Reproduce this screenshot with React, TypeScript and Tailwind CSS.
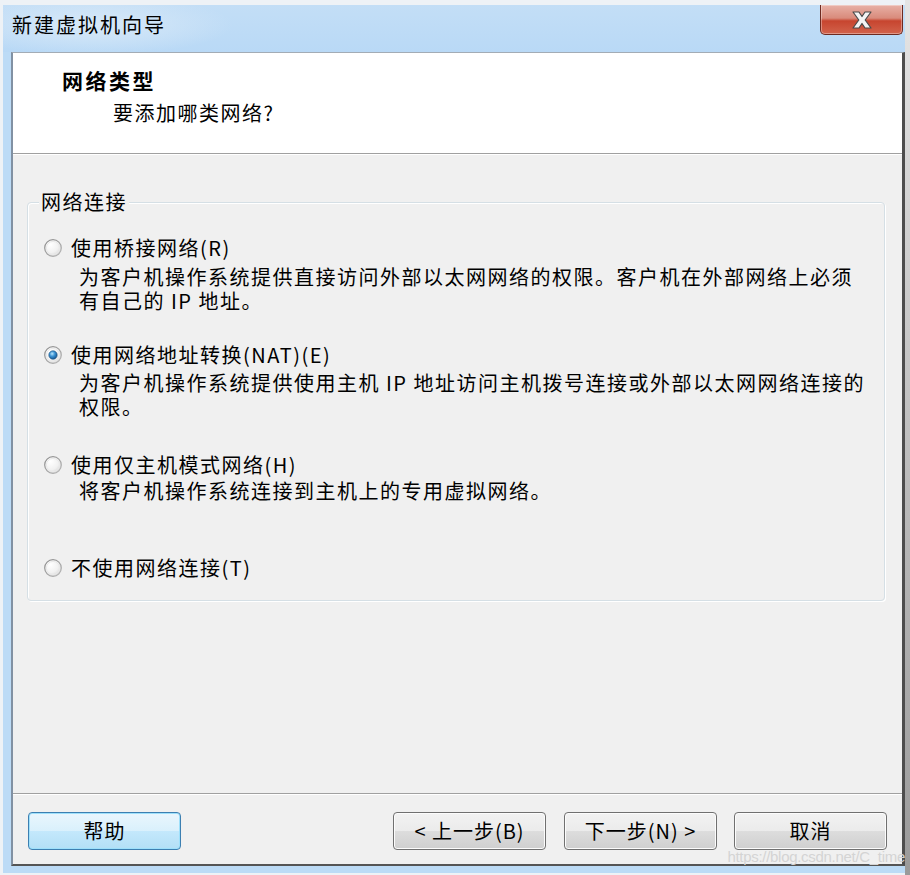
import React from "react";

const FONT = { fontFamily: '"Noto Sans CJK SC", "Noto Sans", sans-serif' };

function Radio({ checked }: { checked?: boolean }) {
  return (
    <svg width="18" height="18" viewBox="0 0 18 18" className="shrink-0">
      <defs>
        <radialGradient id="rg-off" cx="35%" cy="30%" r="80%">
          <stop offset="0%" stopColor="#ffffff" />
          <stop offset="60%" stopColor="#f1f1f1" />
          <stop offset="100%" stopColor="#d2d2d2" />
        </radialGradient>
        <linearGradient id="rg-ring" x1="0" y1="0" x2="1" y2="1">
          <stop offset="0%" stopColor="#8a8a8a" />
          <stop offset="100%" stopColor="#b8b8b8" />
        </linearGradient>
        <radialGradient id="rg-dot" cx="40%" cy="35%" r="70%">
          <stop offset="0%" stopColor="#b8e5fb" />
          <stop offset="45%" stopColor="#3a92d3" />
          <stop offset="100%" stopColor="#114f8a" />
        </radialGradient>
      </defs>
      <circle cx="9" cy="9" r="8.3" fill="url(#rg-off)" stroke="url(#rg-ring)" strokeWidth="1.2" />
      <circle cx="9" cy="9" r="6.6" fill="none" stroke="#e9e9e9" strokeWidth="1" />
      {checked && <circle cx="9" cy="9" r="4.2" fill="url(#rg-dot)" stroke="#1d4f7c" strokeWidth="0.6" />}
    </svg>
  );
}

function Btn({ children, primary }: { children: React.ReactNode; primary?: boolean }) {
  return (
    <div
      className={
        primary
          ? "w-[153px] h-[38px] rounded-[4px] border border-[#3c7fb1] shadow-[inset_0_0_0_1px_#9ee0fb] bg-[linear-gradient(to_bottom,#eaf6fd_0%,#d9f0fc_50%,#c4e8fc_50%,#b3dff6_100%)] flex items-center justify-center text-[20px] tracking-[1px] text-black"
          : "w-[153px] h-[38px] rounded-[4px] border border-[#707070] shadow-[inset_0_0_0_1px_#fcfcfc] bg-[linear-gradient(to_bottom,#f2f2f2_0%,#ebebeb_50%,#dddddd_50%,#cfcfcf_100%)] flex items-center justify-center text-[20px] tracking-[1px] text-black"
      }
    >
      {children}
    </div>
  );
}

export default function App() {
  return (
    <div className="w-[910px] h-[875px] bg-[#eef2f6] flex overflow-hidden relative" style={FONT}>
      <div className="flex-1 flex flex-col pt-[5px] pl-[3px] pb-[2px]">
        <div className="flex-1 flex flex-col bg-[#bcdbf6]">
          {/* Title bar */}
          <div className="h-[47px] shrink-0 flex items-start justify-between pl-[9px] pr-[2px] bg-[radial-gradient(ellipse_140px_30px_at_90px_20px,#d8e9f8_0%,rgba(216,233,248,0)_100%),linear-gradient(to_bottom,#c3def6,#b9d9f6)]">
            <div className="pt-[7px] text-[20px] leading-[26px] tracking-[2px] text-black">新建虚拟机向导</div>
            <div className="w-[83px] h-[30px] rounded-b-[5px] border border-t-0 border-[#6e2a20] bg-[linear-gradient(to_bottom,#e8b1a6_0%,#d98b7c_45%,#c7452f_55%,#d2634c_100%)] flex items-center justify-center shadow-[inset_0_0_0_1px_rgba(255,255,255,0.35)]">
              <svg width="22" height="18" viewBox="0 0 22 18">
                <path
                  d="M2 1 H8 L11 5.5 L14 1 H20 L14.2 9 L20 17 H14 L11 12.5 L8 17 H2 L7.8 9 Z"
                  fill="#f4f4f4"
                  stroke="#4a4a4a"
                  strokeWidth="1.2"
                  strokeLinejoin="round"
                />
              </svg>
            </div>
          </div>
          {/* Body with left frame */}
          <div className="flex-1 flex pl-[8px] pb-[7px]">
            <div className="flex-1 flex flex-col border-l-2 border-l-[#8191a3] border-r-[3px] border-r-[#4d4d4d] border-b-2 border-b-[#555555] border-t border-t-[#a3acb5] bg-[#f0f0f0]">
              {/* Header */}
              <div className="h-[100px] shrink-0 bg-white pl-[49px] pt-[13px]">
                <div className="text-[21px] leading-[28px] font-bold tracking-[2.5px] text-black">网络类型</div>
                <div className="mt-[6px] pl-[51px] text-[20px] leading-[26px] tracking-[1.5px] text-black">要添加哪类网络?</div>
              </div>
              <div className="h-[1px] bg-[#a0a0a0]" />
              <div className="h-[1px] bg-white" />
              {/* Main */}
              <div className="flex-1 pt-[47px] pl-[14px] pr-[17px]">
                <div className="relative rounded-[4px] border border-[#d5dfe5] shadow-[inset_1px_1px_0_#ffffff,1px_1px_0_#ffffff] pt-[33px] pb-[20px] text-[20px] tracking-[1.5px] text-black">
                  <div className="absolute left-[11px] top-[-13px] px-[2px] bg-[#f0f0f0] leading-[24px]">网络连接</div>

                  <div className="flex items-center h-[24px] pl-[16px] gap-[9px]">
                    <Radio />
                    <span className="leading-[24px]">使用桥接网络(R)</span>
                  </div>
                  <div className="mt-[5px] pl-[51px] leading-[24px]">
                    为客户机操作系统提供直接访问外部以太网网络的权限。客户机在外部网络上必须
                    <br />
                    有自己的 IP 地址。
                  </div>

                  <div className="mt-[30px] flex items-center h-[24px] pl-[16px] gap-[9px]">
                    <Radio checked />
                    <span className="leading-[24px]">使用网络地址转换(NAT)(E)</span>
                  </div>
                  <div className="mt-[4px] pl-[51px] leading-[24px]">
                    为客户机操作系统提供使用主机 IP 地址访问主机拨号连接或外部以太网网络连接的
                    <br />
                    权限。
                  </div>

                  <div className="mt-[34px] flex items-center h-[24px] pl-[16px] gap-[9px]">
                    <Radio />
                    <span className="leading-[24px]">使用仅主机模式网络(H)</span>
                  </div>
                  <div className="mt-[2px] pl-[51px] leading-[24px]">将客户机操作系统连接到主机上的专用虚拟网络。</div>

                  <div className="mt-[53px] flex items-center h-[24px] pl-[16px] gap-[9px]">
                    <Radio />
                    <span className="leading-[24px]">不使用网络连接(T)</span>
                  </div>
                </div>
              </div>
              <div className="h-[1px] bg-[#a0a0a0]" />
              <div className="h-[1px] bg-white" />
              {/* Buttons */}
              <div className="h-[69px] shrink-0 flex items-start pt-[17px] pl-[15px] pr-[15px]">
                <Btn primary>帮助</Btn>
                <div className="flex-1" />
                <div className="flex gap-[18px]">
                  <Btn>&lt; 上一步(B)</Btn>
                  <Btn>下一步(N) &gt;</Btn>
                </div>
                <div className="w-[17px]" />
                <Btn>取消</Btn>
              </div>
            </div>
          </div>
        </div>
      </div>
      <div className="w-[5px] bg-[linear-gradient(to_bottom,#e4e4e4,#9a9a9a)]" />
      <div
        className="absolute right-[5px] bottom-[9px] text-[15px] leading-[18px] text-[#d4d4d4] tracking-[-0.3px]"
        style={{ fontFamily: '"Liberation Sans", sans-serif' }}
      >
        https://blog.csdn.net/C_time
      </div>
    </div>
  );
}
